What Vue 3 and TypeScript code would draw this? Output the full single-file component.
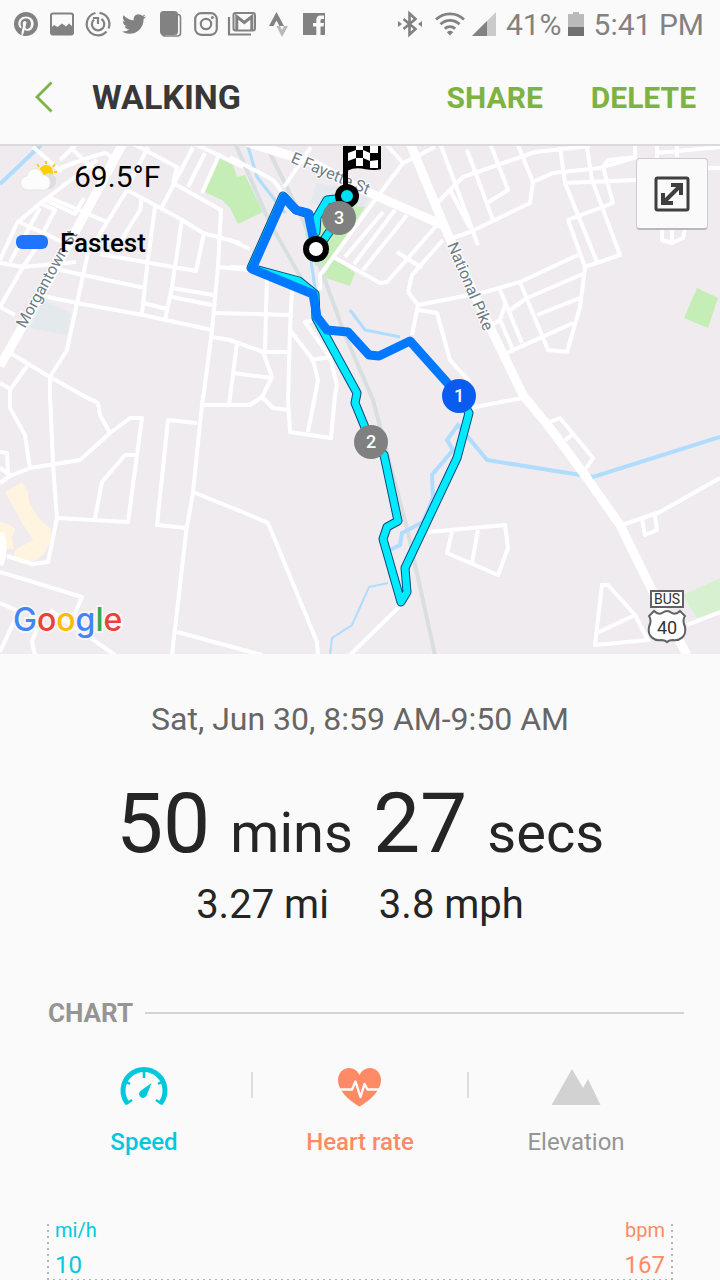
<script setup lang="ts">
import { ref } from 'vue'

interface Marker {
  label: string
  x: number
  y: number
  color: string
}

interface Tab {
  id: string
  label: string
}

const tabs: Tab[] = [
  { id: 'speed', label: 'Speed' },
  { id: 'heart', label: 'Heart rate' },
  { id: 'elevation', label: 'Elevation' },
]
const shown = ref<Record<string, boolean>>({ speed: true, heart: true, elevation: false })

function toggle(id: string): void {
  shown.value[id] = !shown.value[id]
}

const streets: string[] = [
  // north-west
  'M33 147L62 172M78 143L60 160M70 147L100 175M60 168L97 155L106 153L115 160',
  'M48 197L107 222M45 200L75 214L84 198M0 260L17 223L42 202L67 183L97 160',
  'M42 204L55 210L43 233M17 221L63 242M10 262L40 208M0 263L23 267L76 262M0 307L23 267L38 245M0 307L15 315',
  'M60 270L145 288M100 254L150 263L196 271L204 233M43 296L77 303L143 315L212 330',
  'M127 190L177 217L203 233L240 243M127 190L90 250M88 253L77 303L67 350L50 377L50 395',
  'M142 197L140 210L117 247M155 207L147 267L142 313M182 220L172 287L165 320',
  'M173 183L221 210L218 267L212 330L203 400M162 207L193 147M188 187L205 153M202 193L220 153',
  'M193 143L243 167M132 143L177 167L173 183M148 147L127 188',
  'M172 288L213 295M172 297L212 305M143 303L167 309M218 267L250 270M213 313L290 315M212 337L230 340L263 352L290 352M237 343L229 405',
  'M7 351L50 377L82 395L98 403L100 415L110 433M27 366L10 390M0 383L12 390',
  // south-west
  'M10 390L10 408L25 435L30 468M50 395L53 465L57 518L48 562L32 564L7 556',
  'M0 483L10 476L30 468L80 460L110 433L130 418L142 418L128 522L57 518',
  'M136 455L125 455L102 482L95 518M197 423L168 420L157 525L187 528',
  'M203 395L193 492L186 533L172 655M193 492L240 511L268 523L317 642L318 655',
  'M203 405L250 405L262 397L273 408L288 410M0 452L7 453L8 472M0 468L10 475',
  'M0 572L82 597L73 618M0 603L20 612M50 610L115 655M0 652L17 615M37 628L32 642L35 655M177 632L262 655',
  // centre
  'M230 157L273 180L283 193M311 147L284 187M228 239L250 249M230 267L250 268M267 275L265 350M292 287L290 330L313 360L318 380L308 432',
  'M290 330L288 400L290 432L331 438L335 395L337 385L330 357L310 360M330 357L305 322L315 320M263 352L272 377L262 397M233 373L272 378',
  'M320 290L320 275L375 200L403 163L435 147M333 257L357 270L380 283L387 282L437 225M345 257L383 212M363 270L407 215M354 264L395 210',
  'M397 252L422 268M408 292L412 275L443 240M408 292L418 305L412 335M418 305L485 292L520 282L578 255M418 310L437 313L450 360L470 382',
  'M453 238L470 232L530 203L533 182L553 173L600 168L637 157M437 203L463 177L535 152L590 146M450 190L470 228M385 143L403 163',
  // north-east
  'M490 143L508 190L487 203M467 150L493 220M517 143L533 182M560 147L565 183L597 262M440 143L478 245',
  'M587 147L592 180L620 255L585 267L568 220L613 203L603 167L608 160L637 157M565 183L637 180M635 143L635 157M657 153L720 147M657 143V160M677 143V157M706 168H720',
  'M662 228L662 240L672 243L683 238L685 228M672 228V243M585 268L580 307L567 352L548 350L520 282',
  'M510 310L527 298L585 273M537 315L580 298M507 353L573 323M500 290L522 343M492 325L500 320L513 350M505 305L500 320',
  // south-east
  'M470 408L522 398M550 422L560 418L593 458L585 470M565 440L572 435M428 532L505 525L508 548L498 575L447 553L452 532M472 563L478 530',
  'M622 525L660 512L720 478M642 520L645 535L657 530L655 515M595 645L602 585L608 585L635 615L648 640ZM597 633L635 615M687 625L720 612M400 606L350 655',
]

const highways: string[] = [
  'M123 143L80 223L53 273L0 366',
  'M240 140L313 163L363 190L445 226',
  'M410 143L443 223L470 285L490 327L523 395L550 428L587 478L620 525L653 592L687 655',
]

const route =
  'M344 198L327 200L317 217L316 232M334 225L323 241M315 245L309 214L296 210L283 196L251 268L299 281L315 294L316 318L357 393L355 403L371 442L384 455L398 521L387 527L383 539L401 602L407 592L405 568L457 458L469 413L459 396'
const fastest =
  'M314 242L308 213L296 210L284 197L252 269L313 294L317 317L327 330L348 332L369 355L379 356L410 341L459 396'

const markers: Marker[] = [
  { label: '3', x: 339, y: 218, color: '#808080' },
  { label: '2', x: 371, y: 442, color: '#808080' },
  { label: '1', x: 459, y: 396, color: '#0a5cf0' },
]
</script>

<template>
  <div class="screen">
    <div class="status">
      <div class="notices">
        <svg viewBox="0 0 36 36" class="ni"><path transform="translate(6 6)" d="M12 0C5.373 0 0 5.372 0 12c0 5.084 3.163 9.426 7.627 11.174-.105-.949-.2-2.405.042-3.441.218-.937 1.407-5.965 1.407-5.965s-.359-.719-.359-1.782c0-1.668.967-2.914 2.171-2.914 1.023 0 1.518.769 1.518 1.69 0 1.029-.655 2.568-.994 3.995-.283 1.194.599 2.169 1.777 2.169 2.133 0 3.772-2.249 3.772-5.495 0-2.873-2.064-4.882-5.012-4.882-3.414 0-5.418 2.561-5.418 5.207 0 1.031.397 2.138.893 2.738a.36.36 0 01.083.345l-.333 1.36c-.053.22-.174.267-.402.161-1.499-.698-2.436-2.889-2.436-4.649 0-3.785 2.75-7.262 7.929-7.262 4.163 0 7.398 2.967 7.398 6.931 0 4.136-2.607 7.464-6.227 7.464-1.216 0-2.359-.631-2.75-1.378l-.748 2.853c-.271 1.043-1.002 2.35-1.492 3.146C9.57 23.812 10.763 24 12 24c6.627 0 12-5.373 12-12S18.627 0 12 0z" /></svg>
        <svg viewBox="0 0 36 36" class="ni"><rect x="7" y="7.500" width="22" height="21" rx="2" fill="none" stroke="#828282" stroke-width="2" /><path d="M7 22l3-3 3.500 2 4.500-3.500 4 3 3-3 4 3.500v7H7z" /></svg>
        <svg viewBox="0 0 36 36" class="ni"><g fill="none" stroke="#828282" stroke-width="2.200"><path d="M15.500 7A11.300 11.300 0 1 0 26.500 25.500M28.500 22.500A11.300 11.300 0 0 0 19.500 6.800" /><path d="M21.500 13a6.200 6.200 0 1 1-7.500.5" /><path d="M13 12h5v6" /></g></svg>
        <svg viewBox="0 0 36 36" class="ni"><path transform="translate(6 6)" d="M23.953 4.570a10 10 0 01-2.825.775 4.958 4.958 0 002.163-2.723c-.951.555-2.005.959-3.127 1.184a4.920 4.920 0 00-8.384 4.482C7.690 8.095 4.067 6.130 1.640 3.162a4.822 4.822 0 00-.666 2.475c0 1.710.870 3.213 2.188 4.096a4.904 4.904 0 01-2.228-.616v.060a4.923 4.923 0 003.946 4.827 4.996 4.996 0 01-2.212.085 4.936 4.936 0 004.604 3.417 9.867 9.867 0 01-6.102 2.105c-.390 0-.779-.023-1.170-.067a13.995 13.995 0 007.557 2.209c9.053 0 13.998-7.496 13.998-13.985 0-.210 0-.420-.015-.630A9.935 9.935 0 0024 4.590z" /></svg>
        <svg viewBox="0 0 36 36" class="ni"><rect x="8" y="5" width="18" height="24" rx="3.500" /><path d="M26 8.500c2 0 2.500 1 2.500 3V27c0 2-1 3-3 3H14c-2 0-3.500-.5-4-2" fill="none" stroke="#828282" stroke-width="1.600" /></svg>
        <svg viewBox="0 0 36 36" class="ni"><g fill="none" stroke="#828282" stroke-width="2.200"><rect x="7.200" y="7.200" width="21.600" height="21.600" rx="6" /><circle cx="18" cy="18" r="5.200" /></g><circle cx="24.400" cy="11.600" r="1.500" /></svg>
        <svg viewBox="0 0 36 36" class="ni"><path d="M5 11v17.500h22" fill="none" stroke="#828282" stroke-width="2.200" /><rect x="9.500" y="7" width="21.500" height="17.500" rx="2" fill="none" stroke="#828282" stroke-width="2" /><path d="M12.800 24V10.500l7.500 6 7.500-6V24" fill="none" stroke="#828282" stroke-width="3" /></svg>
        <svg viewBox="0 0 36 36" class="ni"><path d="M16.500 6l7.500 14h-4.500l-3-5.500-3 5.500H9z" /><path d="M16.500 20H20l2 4 2-4h4l-6 11z" fill="#b8b8b8" /></svg>
        <svg viewBox="0 0 36 36" class="ni"><path d="M7 7h22v22h-4.500v-8.500h3l.5-3.500h-3.500v-2.500c0-1 .5-1.500 1.500-1.500h2V9.500h-3.500c-3 0-4.200 2-4.200 4.500v3H17v3.500h3.300V29H7z" /></svg>
      </div>
      <div class="system">
        <svg viewBox="0 0 24 26" class="bt"><path d="M5.500 8l12 10-6 5.500V2.500l6 5.500-12 10" fill="none" stroke="#828282" stroke-width="2.600" /><path d="M0 10l4 3-4 3zM24 10l-4 3 4 3z" /></svg>
        <svg viewBox="0 0 30 24" class="wifi"><g fill="none" stroke="#828282" stroke-width="2.800"><path d="M1 7.500a20 20 0 0 1 28 0M5.500 12.300a13.500 13.500 0 0 1 19 0M9.800 16.800a7.500 7.500 0 0 1 10.400 0" /></g><path d="M15 23.500l-3.200-3.300a5 5 0 0 1 6.400 0z" /></svg>
        <svg viewBox="0 0 24 24" class="signal"><path d="M24 0v24H0z" fill="#cacaca" /><path d="M15 9v15H0z" /></svg>
        <span>41%</span>
        <svg viewBox="0 0 16 24" class="battery"><path d="M5 0h6v2h5v22H0V2h5z" fill="#bababa" /><path d="M0 15h16v9H0z" fill="#717171" /></svg>
        <span>5:41 PM</span>
      </div>
    </div>

    <header class="bar">
      <button type="button" class="back" aria-label="Back">
        <svg viewBox="0 0 20 32"><path d="M17.500 1.500L3 16l14.500 14.500" fill="none" stroke="#7cb342" stroke-width="2.800" /></svg>
      </button>
      <h1>WALKING</h1>
      <button type="button" class="action">SHARE</button>
      <button type="button" class="action">DELETE</button>
    </header>

    <section class="map" aria-label="Route map">
      <svg viewBox="0 144 720 510" class="canvas">
        <rect y="144" width="720" height="510" fill="#efebef" />
        <g fill="#c5eeb7">
          <path d="M220 158L233 165L237 177L245 175L263 212L238 224L230 208L222 200L205 192Z" />
          <path d="M365 207L345 200L305 234L315 265L325 268Z" />
          <path d="M335 257L355 273L350 286L323 277Z" />
          <path d="M697 288L718 298L708 328L684 318Z" />
          <path d="M683 595L720 578V610L697 618Z" fill="#d7f1d0" />
        </g>
        <g fill="#e3e9ec">
          <path d="M316 183L373 193L363 207L310 204Z" />
          <path d="M43 300L70 313L67 335L30 328Z" />
        </g>
        <g fill="#fff4df">
          <path d="M5 492L22 482L28 492L29 502L40 520L51 529L50 543L43 555L32 562L14 557L15 550L33 540L22 523L15 510Z" />
          <path d="M0 522L8 524L15 529L12 538L14 549L4 549L0 540Z" />
        </g>
        <g fill="none" stroke="#d9dfe1" stroke-width="4">
          <path d="M235 143L270 223L305 285" />
          <path d="M270 153L303 220L345 335L373 400L407 528L435 655" />
        </g>
        <g fill="none" stroke="#afdcff" stroke-width="4">
          <path d="M43 143L0 184" />
          <path d="M247 143L257 177L285 213M308 240L316 295" stroke-width="3" />
          <path d="M350 310L365 330L400 337" stroke-width="3" />
          <path d="M720 437L593 477L487 460L458 425L447 440L453 450L432 475L433 498L423 522L402 533L400 545L390 550" />
          <path d="M388 583L369 587L352 625L332 638L330 655" stroke-width="2" />
        </g>
        <g fill="none" stroke="#ffffff" stroke-width="4" stroke-linejoin="round">
          <path v-for="d in streets" :key="d" :d="d" />
        </g>
        <path d="M0 533Q6 547 0 565" fill="none" stroke="#ffffff" stroke-width="7" />
        <g fill="none" stroke="#ffffff" stroke-width="9" stroke-linejoin="round">
          <path v-for="d in highways" :key="d" :d="d" />
        </g>
        <g class="road-name">
          <text transform="translate(290 162) rotate(23)">E Fayette St</text>
          <text transform="translate(447 245) rotate(67)">National Pike</text>
          <text transform="translate(25 329) rotate(-61)">Morgantown St</text>
        </g>

        <g fill="none" stroke-linejoin="round" stroke-linecap="round">
          <path :d="route" stroke="#0b4a7c" stroke-width="9" />
          <path :d="route" stroke="#00eaff" stroke-width="7" />
          <path :d="fastest" stroke="#0078ff" stroke-width="9" />
        </g>

        <circle cx="347" cy="196" r="9" fill="#00e0f5" stroke="#000000" stroke-width="6" />
        <path d="M343 144H348V186H343Z" />
        <path d="M347 145C358 139 368 147 381 144V169C368 173 360 164 347 171Z" />
        <g fill="#ffffff">
          <path d="M356 144H363V150L356 150ZM370 146L378 145V153L370 153ZM348 153L356 150V158L348 161ZM363 150L370 153V161L363 158ZM356 158L363 158V166L356 166ZM370 161L378 160V168L370 168Z" />
        </g>
        <g v-for="m in markers" :key="m.label">
          <circle :cx="m.x" :cy="m.y" r="17" :fill="m.color" />
          <text :x="m.x" :y="m.y + 6" class="marker">{{ m.label }}</text>
        </g>
        <circle cx="316" cy="249" r="10" fill="#ffffff" stroke="#000000" stroke-width="6" />

        <rect x="651" y="591" width="32" height="16" fill="#ffffff" stroke="#606366" stroke-width="2" />
        <text x="667" y="604" class="bus">BUS</text>
        <path d="M654 611Q658 615 662 613Q665 611 667 611Q669 611 672 613Q676 615 680 611L685 616Q682 620 685 627C687 637 679 641 673 640Q669 640 667 642Q665 640 661 640C655 641 647 637 649 627Q652 620 649 616Z" fill="#ffffff" stroke="#606366" stroke-width="2" />
        <text x="667" y="634" class="shield">40</text>

        <text x="13" y="631" class="google"><tspan fill="#4285f4">G</tspan><tspan fill="#ea4335">o</tspan><tspan fill="#fbbc05">o</tspan><tspan fill="#4285f4">g</tspan><tspan fill="#34a853">l</tspan><tspan fill="#ea4335">e</tspan></text>
      </svg>

      <div class="legend">
        <div class="weather">
          <svg viewBox="0 0 40 32">
            <g stroke="#fdc92a" stroke-width="2"><path d="M26 1v3M17 4l2 3M35 4l-2 3M37 12h-3M34 21l-2-2M13 11h3" /></g>
            <circle cx="26" cy="12" r="7" fill="#ffd000" />
            <path d="M28 29a8 8 0 0 0 4-15c-4-2-8 0-9 4z" fill="#dedede" />
            <path d="M8 30a7 7 0 0 1-1-14c1-9 14-10 16-1 9 0 10 14 1 15z" fill="#fcfcfc" stroke="#e6e6e6" />
          </svg>
          <span>69.5°F</span>
        </div>
        <div class="pace"><i></i><span>Fastest</span></div>
      </div>
      <button type="button" class="expand" aria-label="Expand map">
        <svg viewBox="0 0 36 36"><rect x="2" y="2" width="32" height="32" rx="1.500" fill="none" stroke="#3f3f3f" stroke-width="3" /><path d="M11 25L25 11" stroke="#3f3f3f" stroke-width="4" /><path d="M17 7h12v12h-4v-8H17zM7 17h4v8h8v4H7z" fill="#3f3f3f" /></svg>
      </button>
    </section>

    <section class="summary">
      <p class="date">Sat, Jun 30, 8:59 AM-9:50 AM</p>
      <p class="duration"><b>50</b><span>mins</span><b>27</b><span>secs</span></p>
      <p class="totals"><span>3.27 mi</span><span>3.8 mph</span></p>
    </section>

    <section class="chart">
      <h2>CHART</h2>
      <div class="tabs">
        <button v-for="t in tabs" :key="t.id" type="button" :class="['tab', t.id, { on: shown[t.id] }]" :aria-pressed="shown[t.id]" @click="toggle(t.id)">
          <svg v-if="t.id === 'speed'" viewBox="0 0 48 40">
            <path d="M7.500 36.500A21 21 0 1 1 40.500 36.500" fill="none" stroke="currentColor" stroke-width="5" />
            <path d="M24 3v8M10 17l-5-3M38 17l5-3M12 33l-6 4M36 33l6 4" stroke="currentColor" stroke-width="2.600" />
            <path d="M31.500 16L27 27.500a4 4 0 1 1-6-4z" fill="currentColor" />
          </svg>
          <svg v-else-if="t.id === 'heart'" viewBox="0 0 48 40">
            <path d="M23.500 39.500C16 35.500 2 25 2 13 2 6 7 1 13 1c5 0 8.500 3 10.500 7 2-4 5.500-7 10.500-7 6 0 11 5 11 12 0 12-14 22.500-21.500 26.500z" fill="currentColor" />
            <path d="M4 22.500h12l3.500-8 5 15.500 4-13 3 5.500h14" fill="none" stroke="#fafafa" stroke-width="2.400" stroke-linejoin="round" />
          </svg>
          <svg v-else viewBox="0 0 48 40"><path d="M-.5 38L20 2l11 19 5-9 12.500 26z" fill="#d2d2d2" /></svg>
          <span>{{ t.label }}</span>
        </button>
      </div>
      <div class="plot">
        <div class="axis speed on"><span>mi/h</span><b>10</b></div>
        <div class="axis heart on"><span>bpm</span><b>167</b></div>
      </div>
    </section>
  </div>
</template>

<style>
body {
  background: #fafafa;
}
</style>

<style scoped>
.screen {
  font-family: Roboto, "Liberation Sans", sans-serif;
  background: #fafafa;
  color: #252525;
  overflow: hidden;
}
svg {
  display: block;
  overflow: visible;
}
p, h1, h2 {
  margin: 0;
  font-weight: 400;
}
button {
  font: inherit;
  color: inherit;
  background: none;
  border: 0;
  padding: 0;
  cursor: pointer;
}
.status {
  display: flex;
  justify-content: space-between;
  align-items: center;
  height: 48px;
  padding: 0 16px 0 8px;
  color: #828282;
  font-size: 30px;
}
.status svg {
  fill: #828282;
}
.notices, .system {
  display: flex;
  align-items: center;
}
.ni {
  width: 36px;
  height: 36px;
}
.bt {
  width: 24px;
  height: 26px;
  margin-right: 13px;
}
.wifi {
  width: 30px;
  height: 24px;
  margin-right: 7px;
}
.signal {
  width: 24px;
  height: 24px;
  margin-right: 10px;
}
.battery {
  width: 16px;
  height: 24px;
  margin: 0 10px 0 6px;
}
.bar {
  display: flex;
  align-items: center;
  height: 96px;
  padding: 2px 24px 0 34px;
  box-sizing: border-box;
}
.back svg {
  width: 20px;
  height: 32px;
}
h1 {
  flex: 1;
  margin-left: 38px;
  font-size: 34px;
  font-weight: 700;
  color: #383838;
}
.action {
  margin-left: 48px;
  font-size: 30px;
  font-weight: 700;
  color: #7cb342;
}
.map {
  position: relative;
  overflow: hidden;
}
.map::after {
  content: "";
  position: absolute;
  inset: 0 0 auto;
  height: 2px;
  background: #dcd9dc;
}
.canvas {
  width: 100%;
  height: auto;
  overflow: hidden;
}
.road-name {
  font-size: 16px;
  fill: #6f7c84;
  stroke: #ffffff;
  stroke-width: 2px;
  paint-order: stroke;
}
.marker {
  font-size: 18px;
  font-weight: 500;
  fill: #ffffff;
  text-anchor: middle;
}
.bus, .shield {
  font-size: 14px;
  fill: #333333;
  text-anchor: middle;
}
.shield {
  font-size: 18px;
}
.google {
  font-family: Inter, sans-serif;
  font-size: 32px;
  font-weight: 500;
  stroke: #f7f5f7;
  stroke-width: 4px;
  paint-order: stroke;
}
.legend {
  position: absolute;
  top: 14px;
  left: 16px;
  color: #000000;
}
.weather {
  display: flex;
  align-items: center;
  gap: 14px;
  height: 36px;
  padding-left: 4px;
  font-size: 30px;
}
.weather svg {
  width: 40px;
  height: 32px;
}
.pace {
  display: flex;
  align-items: center;
  gap: 12px;
  height: 30px;
  margin-top: 34px;
  font-size: 26px;
  font-weight: 500;
}
.pace i {
  width: 32px;
  height: 14px;
  margin-bottom: 2px;
  border-radius: 6px;
  background: #2074ff;
}
.expand {
  position: absolute;
  top: 14px;
  right: 12px;
  display: grid;
  place-items: center;
  width: 72px;
  height: 72px;
  border: 1px solid #cfcccf;
  border-bottom: 2px solid #b9b7b9;
  border-radius: 4px;
  background: #fafafa;
}
.expand svg {
  width: 36px;
  height: 36px;
}
.summary {
  padding-top: 44px;
  text-align: center;
}
.date {
  font-size: 32px;
  line-height: 42px;
  color: #666666;
}
.duration {
  display: flex;
  justify-content: center;
  align-items: baseline;
  gap: 20px;
  margin-top: 38px;
  font-size: 56px;
  line-height: 92px;
}
.duration b {
  font-size: 84px;
  font-weight: 400;
}
.totals {
  display: flex;
  justify-content: center;
  gap: 50px;
  margin-top: 2px;
  font-size: 40px;
  line-height: 48px;
}
.chart {
  padding: 68px 36px 0;
}
h2 {
  display: flex;
  align-items: center;
  gap: 12px;
  margin-left: 12px;
  font-size: 26px;
  line-height: 32px;
  font-weight: 700;
  color: #959595;
}
h2::after {
  content: "";
  flex: 1;
  height: 2px;
  background: #d3d3d3;
}
.tabs {
  display: grid;
  grid-template-columns: repeat(3, 1fr);
  margin-top: 38px;
}
.tab {
  position: relative;
  display: flex;
  flex-direction: column;
  align-items: center;
  gap: 19px;
  font-size: 24px;
  line-height: 32px;
  color: #959595;
}
.tab + .tab::before {
  content: "";
  position: absolute;
  left: -1px;
  top: 5px;
  width: 2px;
  height: 26px;
  background: #dedede;
}
.tab svg {
  width: 48px;
  height: 40px;
}
.tab.on {
  font-weight: 500;
}
.speed.on {
  color: #00c8dc;
}
.heart.on {
  color: #ff8a65;
}
.plot {
  display: flex;
  justify-content: space-between;
  margin: 66px 11px 0;
  padding: 0 8px;
  height: 56px;
  background:
    repeating-linear-gradient(180deg, #b5b5b5 0 2px, transparent 2px 6px) left / 2px 100% no-repeat,
    repeating-linear-gradient(180deg, #b5b5b5 0 2px, transparent 2px 6px) right / 2px 100% no-repeat,
    repeating-linear-gradient(90deg, #b5b5b5 0 2px, transparent 2px 6px) bottom / 100% 1px no-repeat;
}
.axis {
  display: flex;
  flex-direction: column;
}
.axis span {
  font-size: 20px;
  line-height: 12px;
}
.axis b {
  margin-top: 14px;
  font-size: 24px;
  line-height: 30px;
  font-weight: 400;
}
.axis.heart {
  text-align: right;
}
</style>
